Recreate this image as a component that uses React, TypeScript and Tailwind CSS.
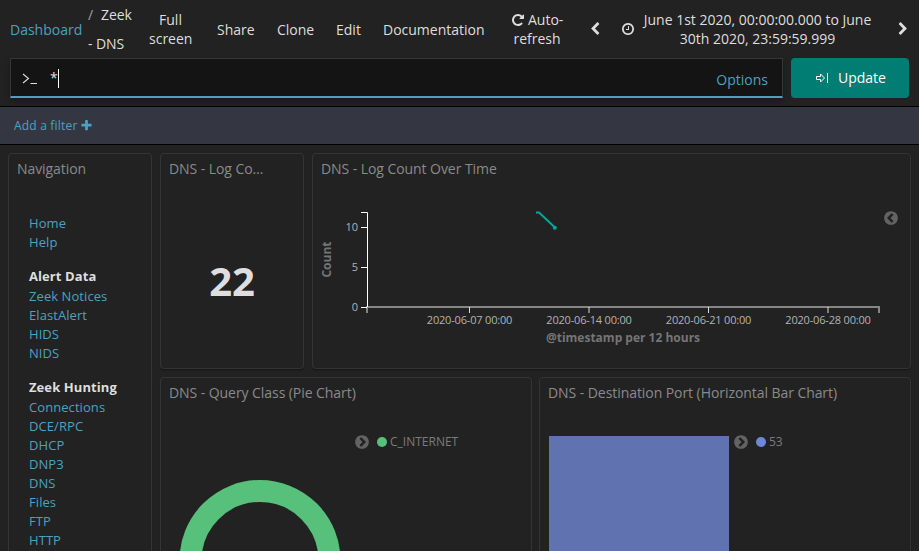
import type { ReactNode } from 'react';

const ICONS = {
  chevronLeft:
    'M1427 301l-531 531 531 531q19 19 19 45t-19 45l-166 166q-19 19-45 19t-45-19l-742-742q-19-19-19-45t19-45l742-742q19-19 45-19t45 19l166 166q19 19 19 45t-19 45z',
  chevronRight:
    'M1363 877l-742 742q-19 19-45 19t-45-19l-166-166q-19-19-19-45t19-45l531-531-531-531q-19-19-19-45t19-45l166-166q19-19 45-19t45 19l742 742q19 19 19 45t-19 45z',
  repeat:
    'M1664 256v448q0 26-19 45t-45 19h-448q-42 0-59-40-17-39 14-69l138-138q-148-137-349-137-104 0-198.5 40.5t-163.5 109.5-109.5 163.5-40.5 198.5 40.5 198.5 109.5 163.5 163.5 109.5 198.5 40.5q119 0 225-52t179-147q7-10 23-12 15 0 25 9l137 138q9 8 9.5 20.5t-7.5 22.5q-109 132-264 204.5t-327 72.5q-156 0-298-61t-245-164-164-245-61-298 61-298 164-245 245-164 298-61q147 0 284.5 55.5t244.5 156.5l130-129q29-31 70-14 39 17 39 59z',
  clock:
    'M1024 544v448q0 14-9 23t-23 9h-320q-14 0-23-9t-9-23v-64q0-14 9-23t23-9h224v-352q0-14 9-23t23-9h64q14 0 23 9t9 23zm416 352q0-148-73-273t-198-198-273-73-273 73-198 198-73 273 73 273 198 198 273 73 273-73 198-198 73-273zm224 0q0 209-103 385.5t-279.5 279.5-385.5 103-385.5-103-279.5-279.5-103-385.5 103-385.5 279.5-279.5 385.5-103 385.5 103 279.5 279.5 103 385.5z',
  plus: 'M1600 736v192q0 40-28 68t-68 28h-416v416q0 40-28 68t-68 28h-192q-40 0-68-28t-28-68v-416h-416q-40 0-68-28t-28-68v-192q0-40 28-68t68-28h416v-416q0-40 28-68t68-28h192q40 0 68 28t28 68v416h416q40 0 68 28t28 68z',
  circleRight:
    'M845 1395l454-454q19-19 19-45t-19-45l-454-454q-19-19-45-19t-45 19l-102 102q-19 19-19 45t19 45l307 307-307 307q-19 19-19 45t19 45l102 102q19 19 45 19t45-19zm819-499q0 209-103 385.5t-279.5 279.5-385.5 103-385.5-103-279.5-279.5-103-385.5 103-385.5 279.5-279.5 385.5-103 385.5 103 279.5 279.5 103 385.5z',
};

const Icon = ({ name, className }: { name: keyof typeof ICONS; className: string }) => (
  <svg viewBox="0 0 1792 1792" fill="currentColor" className={className}>
    <path d={ICONS[name]} />
  </svg>
);

const NAV_GROUPS = [
  { title: '', links: ['Home', 'Help'] },
  { title: 'Alert Data', links: ['Zeek Notices', 'ElastAlert', 'HIDS', 'NIDS'] },
  {
    title: 'Zeek Hunting',
    links: ['Connections', 'DCE/RPC', 'DHCP', 'DNP3', 'DNS', 'Files', 'FTP', 'HTTP'],
  },
];

const Panel = ({ title, className, children }: { title: string; className: string; children: ReactNode }) => (
  <section
    className={`flex flex-col overflow-hidden rounded border border-[#343434] bg-[#222] shadow-[0_2px_2px_-1px_rgba(0,0,0,0.4)] ${className}`}
  >
    <h2 className="h-[30px] shrink-0 truncate pl-2 pr-8 text-[14px] leading-[30px] tracking-[-0.065px] text-[#8a8a8a]">
      {title}
    </h2>
    {children}
  </section>
);

const TopBar = () => (
  <header className="flex h-[58px] shrink-0 items-center text-[14px] leading-[19px] text-[#dedede]">
    <a className="ml-2.5 w-[78px] text-[#4da1c0]">Dashboard</a>
    <div className="w-[61px] leading-[29px] tracking-[-0.1px]">
      <span className="mr-2 text-[#a0a0a0]">/</span>Zeek
      <br />- DNS
    </div>
    <div className="w-[43px] text-center">Full screen</div>
    <div className="ml-[25px] w-[60px]">Share</div>
    <div className="w-[59px]">Clone</div>
    <div className="w-[47px]">Edit</div>
    <div className="w-[128px]">Documentation</div>
    <div className="w-[52px] text-center">
      <span className="whitespace-nowrap">
        <Icon name="repeat" className="mr-[3px] inline size-[14px] align-[-2px]" />
        Auto-
      </span>
      <br />
      refresh
    </div>
    <Icon name="chevronLeft" className="ml-[25px] size-[14px]" />
    <Icon name="clock" className="ml-[19px] size-[14px]" />
    <div className="ml-1 w-[237px] text-center">
      June 1st 2020, 00:00:00.000 to June 30th 2020, 23:59:59.999
    </div>
    <Icon name="chevronRight" className="ml-5 size-[14px]" />
  </header>
);

const QueryBar = () => (
  <div className="flex h-12 shrink-0 gap-2 pl-2.5 pr-2.5">
    <div className="flex h-10 w-[773px] items-center border border-b-2 border-[#363636] border-b-[#4da1c0] bg-[#141414] pl-[11px] pr-3.5 text-[14px] shadow-[0_4px_6px_rgba(0,0,0,0.25)]">
      <svg viewBox="0 0 16 16" className="size-4" fill="none" stroke="#dedede" strokeWidth="1.1">
        <path d="M1 4l5.5 4.5L1 13M8.5 13.5H15" />
      </svg>
      <span className="ml-3 text-[#dedede]">*</span>
      <span className="mt-0.5 h-[19px] w-px bg-white" />
      <a className="ml-auto mt-[3px] text-[#4da1c0]">Options</a>
    </div>
    <button className="flex h-10 w-[118px] items-center rounded bg-[#017d73] pl-6 text-[14px] text-white">
      <svg viewBox="0 0 16 16" className="size-4" fill="none" stroke="currentColor">
        <path d="M1.5 6.5h4v-2.5l4 4-4 4v-2.5h-4zM12.5 3v10" />
      </svg>
      <span className="-mt-px ml-[7px]">Update</span>
    </button>
  </div>
);

const TIME_TICKS = [
  { x: 156.5, label: '2020-06-07 00:00' },
  { x: 276, label: '2020-06-14 00:00' },
  { x: 395.5, label: '2020-06-21 00:00' },
  { x: 515, label: '2020-06-28 00:00' },
];

const COUNT_TICKS = [
  { y: 43.5, label: '10' },
  { y: 83.5, label: '5' },
  { y: 123.5, label: '0' },
];

const CountChart = () => (
  <svg width="597" height="184" viewBox="0 0 597 184" className="shrink-0">
    <path d="M54 129v-6h512v6" fill="none" stroke="#858585" strokeWidth="2" />
    <path d="M48 28.5h6.5V123" fill="none" stroke="#fff" />
    {COUNT_TICKS.map(({ y, label }) => (
      <g key={label}>
        <path d={`M48 ${y}h6`} stroke="#fff" />
        <text x="45" y={y + 3.5} textAnchor="end" fontSize="11" fill="#b3b3b3">
          {label}
        </text>
      </g>
    ))}
    {TIME_TICKS.map(({ x, label }) => (
      <g key={label}>
        <path d={`M${x} 123v6`} stroke="#dedede" />
        <text x={x} y="140" textAnchor="middle" fontSize="11" letterSpacing="-0.18" fill="#b3b3b3">
          {label}
        </text>
      </g>
    ))}
    <path d="M223 28.5h3l16 15" fill="none" stroke="#00a69b" strokeWidth="2" />
    <circle cx="241.8" cy="43.8" r="2" fill="#00a69b" />
    <text x="310" y="158" textAnchor="middle" fontSize="12" fontWeight="700" fill="#757575">
      @timestamp per 12 hours
    </text>
    <text transform="translate(18 75.5) rotate(-90)" textAnchor="middle" fontSize="12" fontWeight="700" fill="#757575">
      Count
    </text>
    <svg x="570" y="26" width="16" height="16" viewBox="0 0 1792 1792" fill="#636363">
      <path d={ICONS.circleRight} transform="matrix(-1 0 0 1 1792 0)" />
    </svg>
  </svg>
);

const Legend = ({ label, dot }: { label: string; dot: string }) => (
  <div className="flex h-4 items-center text-[12px] leading-4 text-[#7b7b7b]">
    <Icon name="circleRight" className="size-4 text-[#636363]" />
    <span className={`ml-[7px] size-[10px] rounded-full ${dot}`} />
    <span className="ml-[3px]">{label}</span>
  </div>
);

export default function App() {
  return (
    <div className="flex h-[551px] w-[919px] flex-col overflow-hidden bg-[#222] font-['Open_Sans',sans-serif]">
      <TopBar />
      <QueryBar />
      <div className="flex h-[39px] shrink-0 items-center border-y border-black bg-[#343741] pl-3.5 text-[12px] tracking-[0.2px] text-[#4da1c0]">
        Add a filter
        <Icon name="plus" className="ml-[2px] size-[13px]" />
      </div>

      <main className="flex min-h-0 flex-1 gap-2 pl-2 pt-2">
        <Panel title="Navigation" className="h-[600px] w-[144px] shrink-0">
          <nav className="mt-[30px] pl-5 text-[13px] leading-[19px]">
            {NAV_GROUPS.map(({ title, links }) => (
              <div key={title} className="mb-4">
                {title && <h3 className="-mt-px mb-px font-bold tracking-[0.08px] text-[#dedede]">{title}</h3>}
                {links.map((link) => (
                  <a key={link} className="block tracking-[0.07px] text-[#4da1c0]">
                    {link}
                  </a>
                ))}
              </div>
            ))}
          </nav>
        </Panel>

        <div className="flex w-[751px] flex-col gap-2">
          <div className="flex shrink-0 gap-2">
            <Panel title="DNS - Log Count" className="h-[216px] w-[144px] shrink-0">
              <div className="mt-[69px] text-center text-[40px] font-bold leading-[56px] text-[#dedede]">22</div>
            </Panel>
            <Panel title="DNS - Log Count Over Time" className="h-[216px] w-[599px] shrink-0">
              <CountChart />
            </Panel>
          </div>
          <div className="flex shrink-0 gap-[7px]">
            <Panel title="DNS - Query Class (Pie Chart)" className="h-[300px] w-[372px]">
              <div className="flex pl-2">
                <svg width="185" height="260" viewBox="0 0 185 260">
                  <circle cx="91" cy="152.5" r="69.5" fill="none" stroke="#57c17b" strokeWidth="22" />
                </svg>
                <div className="mt-[26px]">
                  <Legend label="C_INTERNET" dot="bg-[#57c17b]" />
                </div>
              </div>
            </Panel>
            <Panel title="DNS - Destination Port (Horizontal Bar Chart)" className="h-[300px] w-[372px]">
              <div className="flex pl-[9px] pt-[28px]">
                <div className="h-[240px] w-[180px] bg-[#6072b0]" />
                <div className="-mt-0.5 ml-1">
                  <Legend label="53" dot="bg-[#6f87d8]" />
                </div>
              </div>
            </Panel>
          </div>
        </div>
      </main>
    </div>
  );
}
